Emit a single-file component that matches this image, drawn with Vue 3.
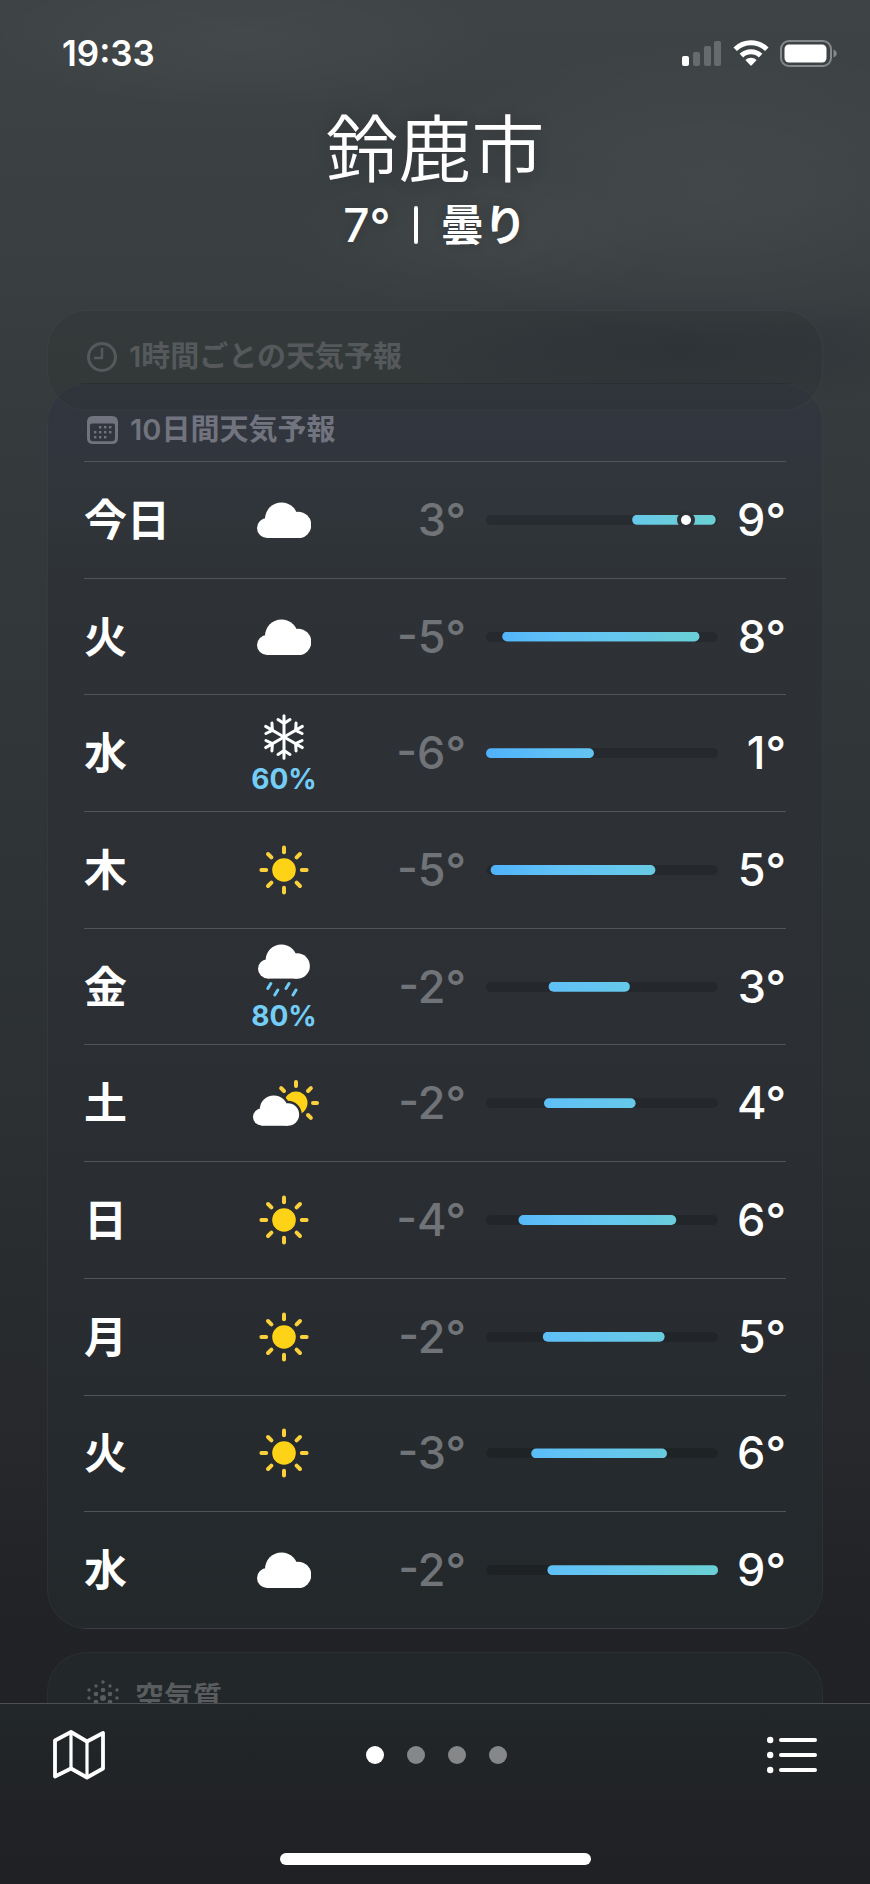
<script setup>
import { computed } from 'vue'

const days = [
  { day: '今日', icon: 'cloud', low: 3, high: 9, from: 63, to: 99, now: 86 },
  { day: '火', icon: 'cloud', low: -5, high: 8, from: 7, to: 92 },
  { day: '水', icon: 'snow', chance: 60, low: -6, high: 1, from: 0, to: 46.5 },
  { day: '木', icon: 'sun', low: -5, high: 5, from: 2, to: 73 },
  { day: '金', icon: 'rain', chance: 80, low: -2, high: 3, from: 27, to: 62 },
  { day: '土', icon: 'partly', low: -2, high: 4, from: 25, to: 64.5 },
  { day: '日', icon: 'sun', low: -4, high: 6, from: 14, to: 82 },
  { day: '月', icon: 'sun', low: -2, high: 5, from: 24.5, to: 77 },
  { day: '火', icon: 'sun', low: -3, high: 6, from: 19.5, to: 78 },
  { day: '水', icon: 'cloud', low: -2, high: 9, from: 26.5, to: 100 },
]

const clip = (d) => ({ clipPath: `inset(0 ${100 - d.to}% 0 ${d.from}% round 5px)` })

const pages = ['鈴鹿市', '2', '3', '4']

const rays = [0, 45, 90, 135, 180, 225, 270, 315]
const partlyRays = [315, 0, 45, 90, 135]
const arms = [0, 60, 120, 180, 240, 300]

const haze = computed(() => {
  const dots = []
  for (const [column, rows] of [[0, [0, 8, 16]], [7, [4, 12]], [14, [0, 8]]]) {
    for (const row of rows) {
      for (const sx of column ? [-1, 1] : [1]) {
        for (const sy of row ? [-1, 1] : [1]) {
          const d = Math.hypot(column, row)
          dots.push({ x: 16 + sx * column, y: 18 + sy * row, r: d < 1 ? 3 : d < 9 ? 2.3 : 1.7 })
        }
      }
    }
  }
  return dots
})
</script>

<template>
  <div class="app">
    <svg class="defs" aria-hidden="true">
      <defs>
        <g id="cloud-shape">
          <circle cx="10" cy="26" r="10" />
          <circle cx="24.5" cy="17" r="16.5" />
          <circle cx="41" cy="23" r="13.3" />
          <rect x="10" y="20" width="31" height="16.2" />
        </g>
      </defs>
    </svg>

    <header class="status">
      <time class="clock">19:33</time>
      <div class="indicators">
        <svg width="40" height="27" viewBox="0 0 40 27" role="img" aria-label="電波">
          <rect x="0" y="16" width="7" height="10" rx="2" fill="#fff" />
          <g fill="#666b6d">
            <rect x="11" y="12" width="7" height="14" rx="2" />
            <rect x="22" y="6" width="7" height="20" rx="2" />
            <rect x="32" y="1" width="7" height="25" rx="2" />
          </g>
        </svg>
        <svg width="36" height="27" viewBox="0 0 36 27" role="img" aria-label="Wi-Fi">
          <g fill="none" stroke="#fff" stroke-width="5">
            <path d="M2.2 9.3A22.6 22.6 0 0 1 33.8 9.3" />
            <path d="M8.4 15.6A13.7 13.7 0 0 1 27.6 15.6" />
          </g>
          <path d="M12.4 20.1A8 8 0 0 1 23.6 20.1L18.7 25.3Q18 26 17.3 25.3Z" fill="#fff" />
        </svg>
        <svg width="57" height="27" viewBox="0 0 57 27" role="img" aria-label="バッテリー">
          <rect x="1" y="1" width="50" height="25" rx="8" fill="none" stroke="#85898b" stroke-width="2" />
          <rect x="4.5" y="4.5" width="42" height="18" rx="4.5" fill="#fff" />
          <path d="M53.5 9.5Q56.7 10.8 56.7 13.5T53.5 17.5Z" fill="#85898b" />
        </svg>
      </div>
    </header>

    <main class="content">
      <div class="place">
        <h1>鈴鹿市</h1>
        <p><span>7°</span><i class="divider"></i><span class="condition">曇り</span></p>
      </div>

      <section class="card hourly">
        <h2>
          <svg width="30" height="30" viewBox="0 0 30 30" aria-hidden="true">
            <circle cx="15" cy="15" r="13.5" fill="none" stroke="currentColor" stroke-width="3" />
            <path d="M15 6V16H7" fill="none" stroke="currentColor" stroke-width="2.4" stroke-linejoin="round" />
          </svg>
          1時間ごとの天気予報
        </h2>
      </section>

      <section class="card daily">
        <h2>
          <svg width="31" height="28" viewBox="0 0 31 28" aria-hidden="true">
            <path fill="currentColor" fill-rule="evenodd" d="M6 0H25Q31 0 31 6V22Q31 28 25 28H6Q0 28 0 22V6Q0 0 6 0ZM5 7.5Q3 7.5 3 9.5V22Q3 25.2 6 25.2H25Q28 25.2 28 22V9.5Q28 7.5 26 7.5Z" />
            <g fill="currentColor">
              <rect x="12" y="10" width="2.4" height="2.4" /><rect x="17" y="10" width="2.4" height="2.4" /><rect x="22" y="10" width="2.4" height="2.4" />
              <rect x="7" y="15" width="2.4" height="2.4" /><rect x="12" y="15" width="2.4" height="2.4" /><rect x="17" y="15" width="2.4" height="2.4" /><rect x="22" y="15" width="2.4" height="2.4" />
              <rect x="7" y="20" width="2.4" height="2.4" /><rect x="12" y="20" width="2.4" height="2.4" /><rect x="17" y="20" width="2.4" height="2.4" />
            </g>
          </svg>
          10日間天気予報
        </h2>
        <ol class="days">
          <li v-for="(d, i) in days" :key="i">
            <span class="day">{{ d.day }}</span>
            <div class="weather">
              <svg v-if="d.icon === 'cloud'" width="54" height="36" viewBox="0 0 54 36" role="img" aria-label="曇り">
                <use href="#cloud-shape" fill="#fff" />
              </svg>
              <svg v-else-if="d.icon === 'sun'" width="50" height="50" viewBox="-25 -25 50 50" role="img" aria-label="晴れ">
                <circle r="11.8" fill="#fdd217" />
                <line v-for="a in rays" :key="a" y1="-17.8" y2="-22.6" :transform="`rotate(${a})`" stroke="#fad03c" stroke-width="4" stroke-linecap="round" />
              </svg>
              <svg v-else-if="d.icon === 'snow'" width="46" height="46" viewBox="-23 -23 46 46" role="img" aria-label="雪">
                <path v-for="a in arms" :key="a" :transform="`rotate(${a})`" d="M0 0V-21.2M-6 -17.4L0 -13.4L6 -17.4" fill="none" stroke="#fff" stroke-width="3" stroke-linecap="round" stroke-linejoin="round" />
              </svg>
              <svg v-else-if="d.icon === 'rain'" width="52" height="53" viewBox="0 0 52 53" role="img" aria-label="雨">
                <use href="#cloud-shape" fill="#fff" transform="scale(.955)" />
                <path d="M12.8 39.5L9.8 44.5M19.8 46L16.8 51M31 39.5L28 44.5M38 46L35 51" stroke="#6fcbf6" stroke-width="3" stroke-linecap="round" />
              </svg>
              <svg v-else width="72" height="46" viewBox="-5 0 72 46" role="img" aria-label="晴れ時々曇り">
                <mask id="behind-cloud" maskUnits="userSpaceOnUse" x="-5" y="0" width="72" height="46">
                  <rect x="-5" width="72" height="46" fill="#fff" />
                  <use href="#cloud-shape" transform="translate(0 15) scale(.85)" fill="#000" stroke="#000" stroke-width="6" />
                </mask>
                <circle cx="43" cy="23" r="11.5" fill="#fdd217" mask="url(#behind-cloud)" />
                <line v-for="a in partlyRays" :key="a" y1="-17" y2="-21" :transform="`translate(43 23) rotate(${a})`" stroke="#fad03c" stroke-width="4" stroke-linecap="round" />
                <use href="#cloud-shape" transform="translate(0 15) scale(.85)" fill="#fff" />
              </svg>
              <span v-if="d.chance" class="chance">{{ d.chance }}%</span>
            </div>
            <span class="low">{{ d.low }}°</span>
            <div class="range">
              <div class="fill" :style="clip(d)"></div>
              <i v-if="d.now" class="now" :style="{ left: d.now + '%' }"></i>
            </div>
            <span class="high">{{ d.high }}°</span>
          </li>
        </ol>
      </section>

      <section class="card air">
        <h2>
          <svg width="32" height="36" viewBox="0 0 32 36" aria-hidden="true">
            <circle v-for="(p, i) in haze" :key="i" :cx="p.x" :cy="p.y" :r="p.r" fill="currentColor" />
          </svg>
          空気質
        </h2>
      </section>
    </main>

    <footer class="toolbar">
      <nav>
        <button type="button" aria-label="マップ">
          <svg width="52" height="50" viewBox="0 0 52 50" aria-hidden="true">
            <g fill="none" stroke="#fff" stroke-linejoin="round">
              <path stroke-width="3.8" d="M2 10.5L18 2L34 11.5L50 3V38.5L34 47.5L18 38.5L2 46.5Z" />
              <path stroke-width="3.2" d="M18 2V38.5M34 11.5V47.5" />
            </g>
          </svg>
        </button>
        <div class="pages">
          <button v-for="(p, i) in pages" :key="p" type="button" class="page" :class="{ active: i === 0 }" :aria-label="p"></button>
        </div>
        <button type="button" aria-label="地点リスト">
          <svg width="50" height="38" viewBox="0 0 50 38" aria-hidden="true">
            <g fill="#fff">
              <circle cx="3.2" cy="4" r="3.2" /><circle cx="3.2" cy="19" r="3.2" /><circle cx="3.2" cy="34" r="3.2" />
              <rect x="12" y="2" width="38" height="4" rx="2" /><rect x="12" y="17" width="38" height="4" rx="2" /><rect x="12" y="32" width="38" height="4" rx="2" />
            </g>
          </svg>
        </button>
      </nav>
      <div class="home"></div>
    </footer>
  </div>
</template>

<style>
body {
  background: #1f2023;
}
</style>

<style scoped>
* {
  box-sizing: border-box;
}

.app {
  display: flex;
  flex-direction: column;
  height: 100vh;
  color: #fff;
  font-family: Inter, "Noto Sans CJK JP", sans-serif;
  background:
    radial-gradient(ellipse 260px 70px at 28% 40px, rgba(255, 255, 255, 0.035), transparent),
    radial-gradient(ellipse 320px 150px at 82% 190px, rgba(255, 255, 255, 0.045), transparent),
    radial-gradient(ellipse 200px 70px at 54% 240px, rgba(255, 255, 255, 0.03), transparent),
    radial-gradient(ellipse 300px 60px at 78% 350px, rgba(24, 26, 44, 0.2), transparent),
    linear-gradient(#3e4346 0, #3a3f42 220px, #363b3d 380px, #33383a 560px, #2c3033 1100px, #27292c 1400px, #222326 1600px, #1f2023 100%);
}

.defs {
  position: absolute;
  width: 0;
  height: 0;
}

.status {
  display: flex;
  align-items: center;
  justify-content: space-between;
  flex: none;
  height: 86px;
  padding: 20px 33px 0 62px;
}

.clock {
  font-size: 35px;
  font-weight: 600;
}

.indicators {
  display: flex;
  align-items: center;
  gap: 11px;
}

.content {
  flex: 1;
  min-height: 0;
  padding: 0 47px;
  overflow-y: auto;
  scrollbar-width: none;
}

.place {
  height: 224px;
  padding-top: 21px;
  text-align: center;
}

h1 {
  margin: 0;
  font-size: 73px;
  font-weight: 350;
  line-height: 86px;
  text-shadow: 0 0 16px rgba(0, 0, 0, 0.2);
}

.place p {
  display: flex;
  align-items: center;
  justify-content: center;
  gap: 23px;
  margin: 0;
  font-size: 46px;
  font-weight: 500;
  line-height: 64px;
  text-shadow: 0 0 12px rgba(0, 0, 0, 0.2);
}

.place .condition {
  font-size: 43px;
  font-weight: 600;
}

.divider {
  width: 4px;
  height: 38px;
  border-radius: 2px;
  background: #fff;
}

.card {
  border: 1px solid rgba(255, 255, 255, 0.04);
  border-radius: 40px;
  padding: 0 36px;
}

h2 {
  display: flex;
  align-items: center;
  gap: 12px;
  height: 77px;
  margin: 0;
  padding: 15px 0 0 3px;
  font-size: 29px;
  font-weight: 600;
  line-height: 40px;
}

.hourly {
  position: relative;
  z-index: 1;
  height: 101px;
  color: #55595b;
  background: rgba(40, 44, 46, 0.2);
}

.daily {
  margin-top: -28px;
  color: #71747e;
  background: linear-gradient(#32363f 0, #31353d 70px, #30353a 130px, #2e3237 200px, #2c3035 600px, #292d31 900px, #23282b 100%);
}

.air {
  height: 112px;
  margin-top: 23px;
  color: #595d5f;
  background: #22272a;
}

.air h2 {
  gap: 16px;
  padding-top: 12px;
}

.days {
  display: grid;
  grid-auto-rows: 1fr;
  min-height: 1167px;
  margin: 0;
  padding: 0;
  list-style: none;
}

.days li {
  display: grid;
  grid-template-columns: 156px 88px 138px minmax(0, 1fr) 68px;
  align-items: center;
  border-top: 1px solid #50555a;
  color: #fff;
  font-size: 45px;
  font-weight: 500;
  line-height: 60px;
}

.days .day {
  font-size: 43px;
  font-weight: 600;
}

.weather {
  display: flex;
  flex-direction: column;
  align-items: center;
  gap: 5px;
}

.chance {
  color: #74cdf7;
  font-size: 28px;
  font-weight: 700;
  line-height: 28px;
}

.low {
  color: #707478;
  text-align: right;
}

.high {
  text-align: right;
}

.range {
  position: relative;
  height: 10px;
  margin-left: 20px;
  border-radius: 5px;
  background: rgba(0, 0, 0, 0.16);
}

.fill {
  height: 100%;
  background: linear-gradient(90deg, #4fb1fb, #60c1f6 30%, #66c8ea 62%, #6accdc 80%, #6ad0d5);
}

.now {
  position: absolute;
  top: 0;
  width: 10px;
  height: 10px;
  margin-left: -5px;
  border-radius: 50%;
  background: #fff;
  box-shadow: 0 0 0 4px #2d3136;
}

.toolbar {
  flex: none;
  height: 181px;
  border-top: 1px solid #4c5052;
  background: linear-gradient(#22272a, #212326 50%, #1f2023);
}

nav {
  display: flex;
  align-items: center;
  justify-content: space-between;
  height: 101px;
  padding: 0 53px;
}

button {
  display: block;
  padding: 0;
  border: 0;
  background: none;
}

button svg {
  display: block;
}

.pages {
  display: flex;
  gap: 23px;
}

.page {
  width: 18px;
  height: 18px;
  border-radius: 50%;
  background: #868789;
}

.page.active {
  background: #fff;
}

.home {
  width: 311px;
  height: 12px;
  margin: 48px auto 0;
  border-radius: 6px;
  background: #fff;
}
</style>
